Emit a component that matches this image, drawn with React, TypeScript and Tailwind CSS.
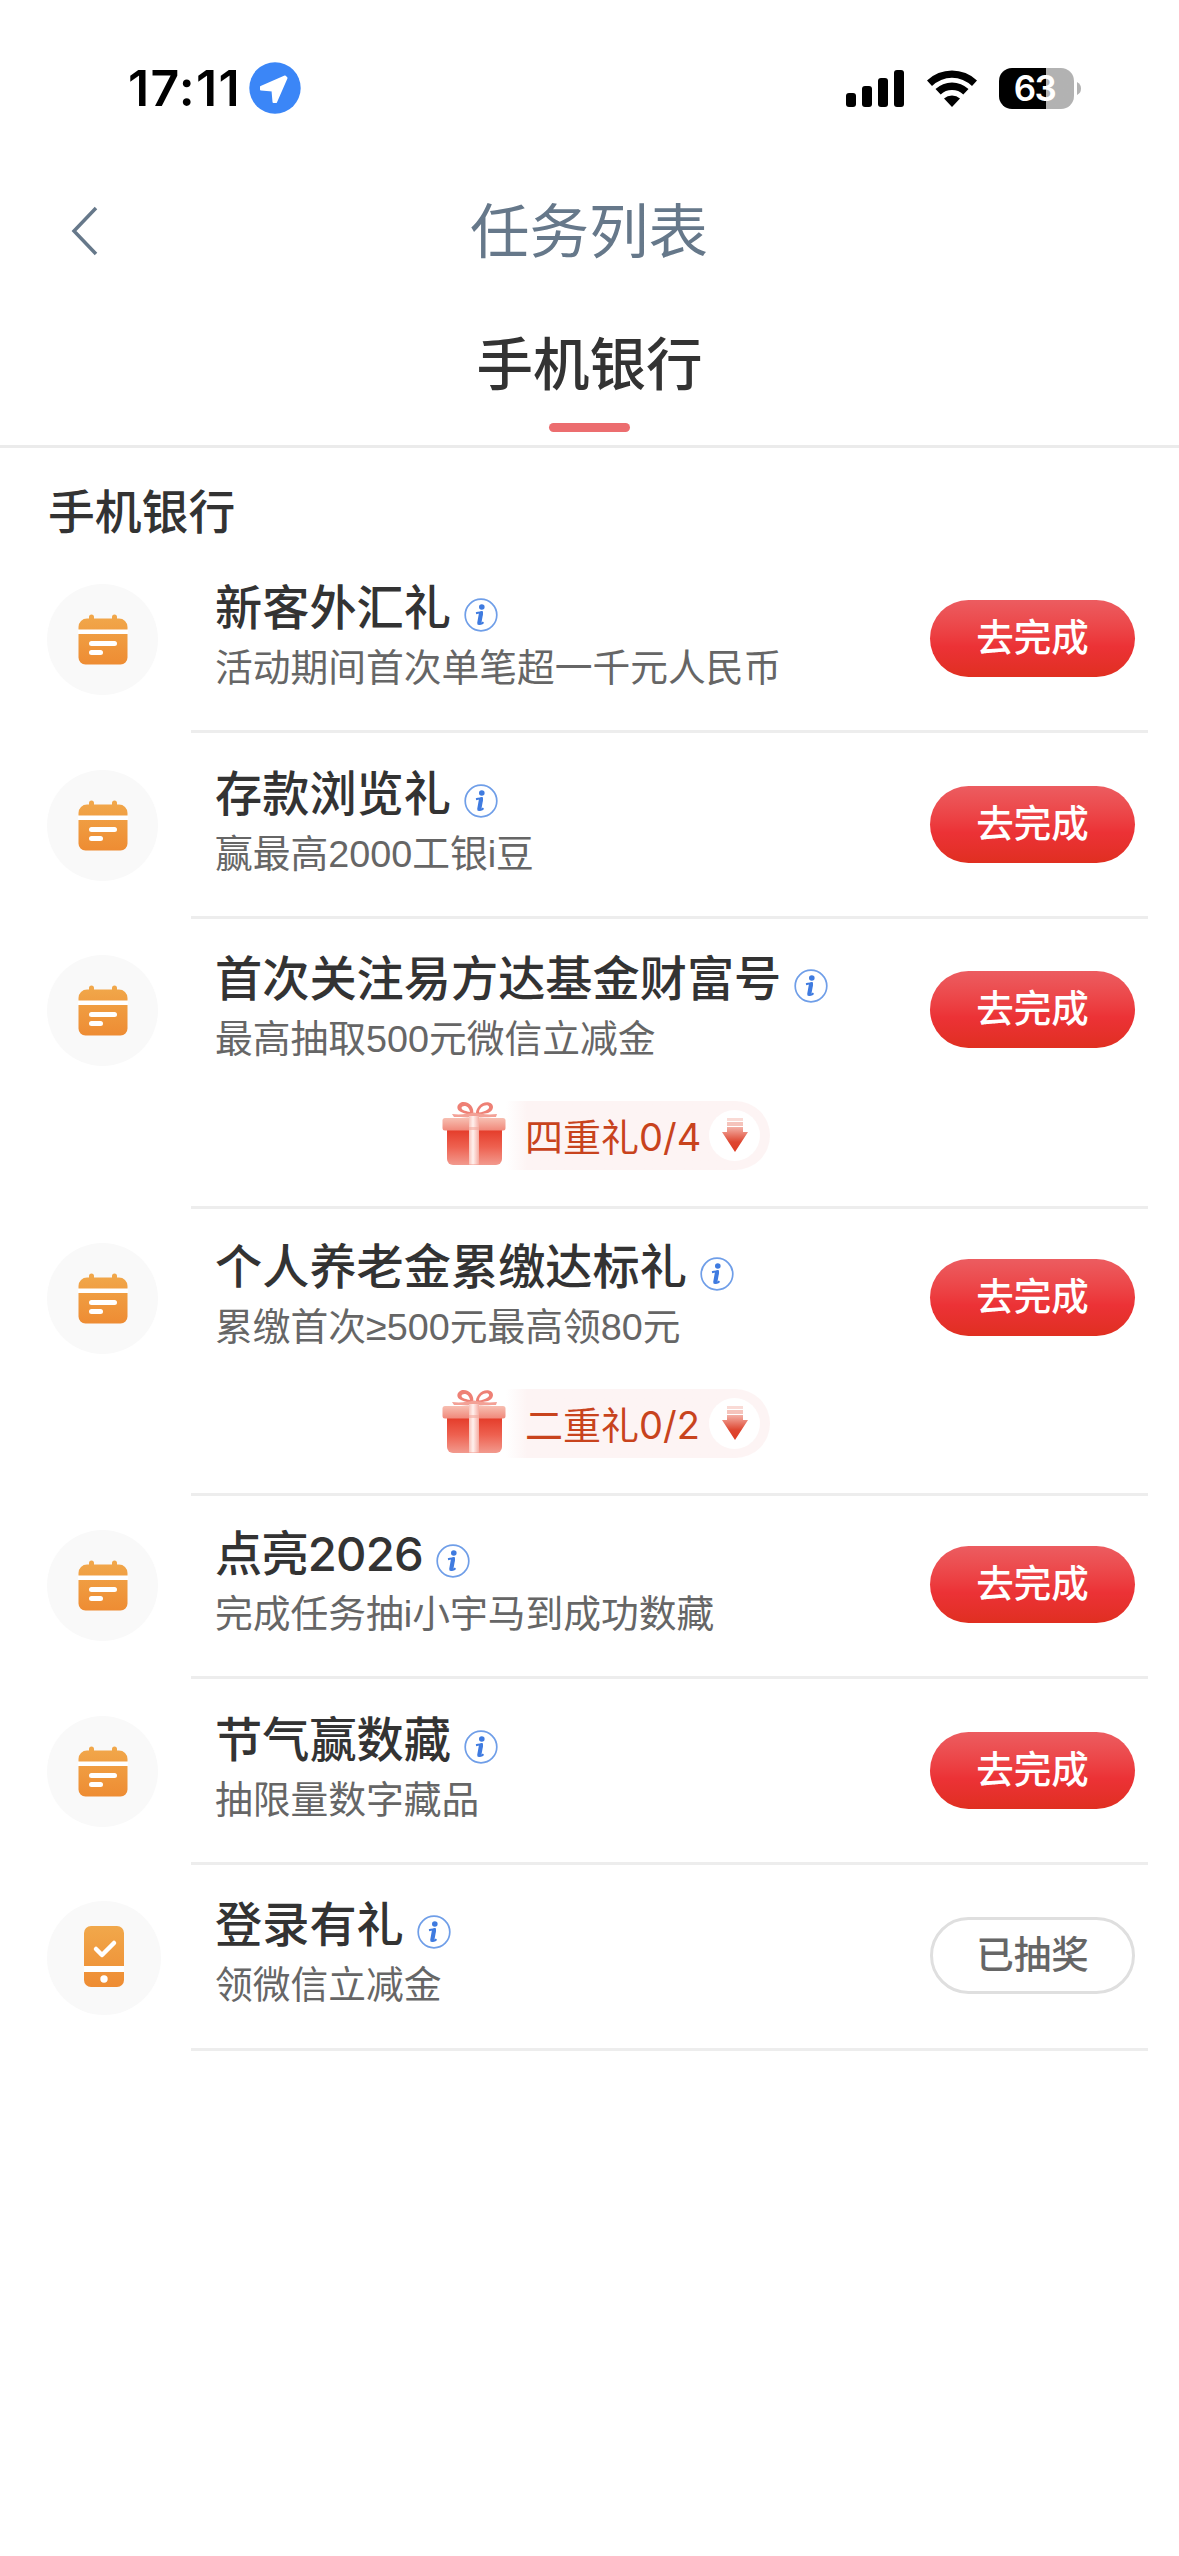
import React from 'react';

interface Task {
  title: string;
  desc: string;
  action: string;
  done?: boolean;
  icon: 'calendar' | 'phone';
  gift?: string;
  rowClass: string;
  titleClass?: string;
}

const tasks: Task[] = [
  { title: '新客外汇礼', desc: '活动期间首次单笔超一千元人民币', action: '去完成', icon: 'calendar', rowClass: 'h-[185px] pt-[36px]' },
  { title: '存款浏览礼', desc: '赢最高2000工银i豆', action: '去完成', icon: 'calendar', rowClass: 'h-[186px] pt-[37px]' },
  { title: '首次关注易方达基金财富号', desc: '最高抽取500元微信立减金', action: '去完成', icon: 'calendar', gift: '四重礼0/4', rowClass: 'h-[290px] pt-[36px]' },
  { title: '个人养老金累缴达标礼', desc: '累缴首次≥500元最高领80元', action: '去完成', icon: 'calendar', gift: '二重礼0/2', rowClass: 'h-[287px] pt-[34px]' },
  { title: '点亮2026', desc: '完成任务抽i小宇马到成功数藏', action: '去完成', icon: 'calendar', rowClass: 'h-[183px] pt-[34px]', titleClass: 'tracking-[-0.8px]' },
  { title: '节气赢数藏', desc: '抽限量数字藏品', action: '去完成', icon: 'calendar', rowClass: 'h-[186px] pt-[37px]' },
  { title: '登录有礼', desc: '领微信立减金', action: '已抽奖', done: true, icon: 'phone', rowClass: 'h-[186px] pt-[36px]' },
];

function StatusBar() {
  return (
    <div className="flex h-[176px] items-center pl-[128px] pr-[98px]">
      <span className="w-[121px] whitespace-nowrap font-['Inter'] text-[50px] font-semibold leading-none tracking-[1.3px] text-black">17:11</span>
      <svg width="52" height="52" viewBox="0 0 52 52">
        <circle cx="26" cy="26" r="25.700" fill="#3b86f7" />
        <path d="M36 14.500 L12 25 L12 27.500 L23.500 28.500 L24.500 40 L27 40 L37.500 16 Z" fill="#fff" stroke="#fff" strokeWidth="2" strokeLinejoin="round" />
      </svg>
      <svg className="ml-auto" width="58" height="37" viewBox="0 0 58 37">
        <rect x="0" y="23" width="10" height="14" rx="3" />
        <rect x="16" y="16" width="10" height="21" rx="3" />
        <rect x="32" y="8" width="10" height="29" rx="3" />
        <rect x="48" y="0" width="10" height="37" rx="3" />
      </svg>
      <svg className="ml-[23px]" width="50" height="37" viewBox="0 0 50 37">
        <path d="M0 10.5 A36 36 0 0 1 50 10.5 L45 16 A28.5 28.5 0 0 0 5 16 Z" />
        <path d="M8.5 19 A24 24 0 0 1 41.5 19 L36.3 24.6 A16.5 16.5 0 0 0 13.7 24.6 Z" />
        <path d="M17 28.5 A12 12 0 0 1 33 28.5 L25 37 Z" />
      </svg>
      <div className="ml-[22px] flex h-[41px] w-[75px] items-center justify-center rounded-[13px] bg-linear-to-r from-black from-[63%] to-[#b2b2b2] to-[63%]">
        <span className="pr-[4px] font-['Inter'] text-[35px] font-semibold leading-none tracking-[-1.5px] text-white">63</span>
      </div>
      <svg className="ml-[3px]" width="4" height="13" viewBox="0 0 4 13">
        <path d="M0 0 Q4 2 4 6.5 T0 13 Z" fill="#b2b2b2" />
      </svg>
    </div>
  );
}

function CalendarIcon() {
  return (
    <svg width="50" height="51" viewBox="0 0 50 51">
      <defs>
        <linearGradient id="calendar" x1="0" y1="0" x2="0" y2="1">
          <stop offset="0" stopColor="#f1a84b" />
          <stop offset="1" stopColor="#ee8c33" />
        </linearGradient>
      </defs>
      <path
        d="M11 4.500 V3 a2.500 2.500 0 0 1 5 0 V4.500 H34 V3 a2.500 2.500 0 0 1 5 0 V4.500 H41 a8.500 8.500 0 0 1 8.500 8.500 V43.500 a7 7 0 0 1 -7 7 H7.500 a7 7 0 0 1 -7 -7 V13 A8.500 8.500 0 0 1 9 4.500 Z"
        fill="url(#calendar)"
      />
      <rect x="0" y="15.500" width="50" height="4.500" fill="#fff" />
      <rect x="11" y="27" width="28" height="5" rx="2.500" fill="#fff" />
      <rect x="11" y="36" width="14" height="5" rx="2.500" fill="#fff" />
    </svg>
  );
}

function PhoneIcon() {
  return (
    <svg className="-mt-[3px]" width="40" height="61" viewBox="0 0 40 61">
      <defs>
        <linearGradient id="phone" x1="0" y1="0" x2="0" y2="1">
          <stop offset="0" stopColor="#f1a84b" />
          <stop offset="1" stopColor="#ee8c33" />
        </linearGradient>
      </defs>
      <rect width="40" height="61" rx="7" fill="url(#phone)" />
      <rect y="40" width="40" height="6" fill="#fff" />
      <path d="M12 23 L18 29 L30 17" stroke="#fff" strokeWidth="4.500" fill="none" strokeLinecap="round" strokeLinejoin="round" />
      <circle cx="20" cy="53" r="3.700" fill="#fff" />
    </svg>
  );
}

function InfoIcon() {
  return (
    <svg className="ml-[13px] mt-[14px] shrink-0" width="34" height="34" viewBox="0 0 34 34" fill="none">
      <circle cx="17" cy="17" r="15.800" stroke="#6f9ee8" strokeWidth="1.700" />
      <circle cx="17.800" cy="9" r="2.800" fill="#3f7be0" />
      <path d="M12 15.200 C14 14.800 16 14.600 18 14 L15.600 24 C15.200 26.500 17 26.300 19.500 24.200" stroke="#3f7be0" strokeWidth="2" strokeLinejoin="round" />
      <path d="M17 15.500 L15.300 25" stroke="#3f7be0" strokeWidth="4.200" strokeLinecap="round" />
    </svg>
  );
}

function GiftIcon() {
  return (
    <svg width="64" height="65" viewBox="0 0 64 65">
      <defs>
        <linearGradient id="giftBox" x1="0" y1="0" x2="0" y2="1">
          <stop offset="0" stopColor="#e43a28" />
          <stop offset="0.500" stopColor="#ee6150" />
          <stop offset="1" stopColor="#f29a8e" />
        </linearGradient>
        <linearGradient id="giftLid" x1="0" y1="0" x2="0" y2="1">
          <stop offset="0" stopColor="#f7bfb2" />
          <stop offset="1" stopColor="#f0887a" />
        </linearGradient>
        <linearGradient id="giftRibbon" x1="0" y1="0" x2="1" y2="0">
          <stop offset="0" stopColor="#f7c4bb" />
          <stop offset="0.400" stopColor="#fff1ee" />
          <stop offset="1" stopColor="#f5aca2" />
        </linearGradient>
      </defs>
      <path
        d="M31 14 C33 6 27 0 20 1 C14 3 14 9 19 11 C23 13 27 13 31 14 Z M28 11 C25 10 20 10 19.500 7 C20 4 27 4 28 11 Z"
        fill="#ee8075"
        fillRule="evenodd"
      />
      <path
        d="M34 14 C33 7 40 0 47 1.500 C53 3 52 10 46 12 C42 13 38 13 34 14 Z M37 11.500 C37 7 42 3.500 46 4.500 C50 7 43 11 37 11.500 Z"
        fill="#ee8075"
        fillRule="evenodd"
      />
      <path d="M10 13 C18 14 26 13 32 11.500 C38 13 46 14 55 13 L54 16 C46 16 38 17 32 16 C26 17 18 16 12 16 Z" fill="#f3a196" />
      <path d="M5 28 H60 V58 a6 6 0 0 1 -6 6 H11 a6 6 0 0 1 -6 -6 Z" fill="url(#giftBox)" />
      <rect x="0.500" y="17" width="63" height="12.500" rx="2.500" fill="url(#giftLid)" />
      <rect x="27" y="15" width="10" height="48.500" fill="url(#giftRibbon)" />
      <rect x="27" y="26" width="10" height="3" fill="#f3a89d" opacity="0.600" />
    </svg>
  );
}

function GiftBadge({ label }: { label: string }) {
  return (
    <div className="ml-[442px] mt-[35px] flex items-start">
      <GiftIcon />
      <div className="flex h-[69px] w-[264px] items-center rounded-r-full bg-linear-to-r from-white to-[#fdf4f4] to-[8%] pl-[19px] pr-[10px]">
        <span className="whitespace-nowrap pt-[2px] font-['Inter','Noto_Sans_CJK_SC',sans-serif] text-[38px] leading-none text-[#c8431d]">{label}</span>
        <span className="ml-auto flex size-[51px] items-center justify-center rounded-full bg-white">
          <svg className="-mt-px" width="26" height="34" viewBox="0 0 26 34">
            <defs>
              <linearGradient id="arrow" x1="0" y1="0" x2="0" y2="1">
                <stop offset="0" stopColor="#f3b0a6" />
                <stop offset="0.600" stopColor="#de4630" />
                <stop offset="1" stopColor="#de3a22" />
              </linearGradient>
            </defs>
            <rect x="5" y="0" width="16" height="3" fill="#f9dad5" />
            <rect x="5" y="4" width="16" height="4" fill="#f5c3bb" />
            <path d="M5 9 H21 V14 H26 L13 34 L0 14 H5 Z" fill="url(#arrow)" />
          </svg>
        </span>
      </div>
    </div>
  );
}

function TaskRow({ task }: { task: Task }) {
  return (
    <li className={`flex flex-col ${task.rowClass}`}>
      <div className="flex h-[111px] items-start pl-[47px] pr-[44px]">
        {task.icon === 'calendar' ? (
          <div className="flex size-[111px] shrink-0 items-center justify-center rounded-full bg-[#f9f9f9]">
            <CalendarIcon />
          </div>
        ) : (
          <div className="-mr-[3px] flex size-[114px] shrink-0 items-center justify-center rounded-full bg-[#f9f9f9]">
            <PhoneIcon />
          </div>
        )}
        <div className="ml-[57px] flex flex-col">
          <div className="flex h-[47px] items-start">
            <h3 className={`whitespace-nowrap font-['Inter','Noto_Sans_CJK_SC',sans-serif] text-[47.200px] font-medium leading-[47px] text-[#333] ${task.titleClass ?? ''}`}>
              {task.title}
            </h3>
            <InfoIcon />
          </div>
          <p className="mt-[18px] whitespace-nowrap text-[37.750px] leading-[38px] text-[#666]">{task.desc}</p>
        </div>
        <button
          className={`ml-auto mt-[16px] flex h-[77px] w-[205px] shrink-0 items-center justify-center rounded-full text-[37.500px] leading-none ${
            task.done
              ? 'border-[3px] border-[#dfdfdf] bg-white font-medium text-[#666]'
              : 'bg-linear-to-b from-[#ec5c60] via-[#ec3236] via-[60%] to-[#e02f20] font-medium text-white'
          }`}
        >
          {task.action}
        </button>
      </div>
      {task.gift && <GiftBadge label={task.gift} />}
      <div className="ml-[191px] mr-[31px] mt-auto h-[3px] bg-[#ededed]" />
    </li>
  );
}

export default function App() {
  return (
    <div className="min-h-[2556px] w-[1179px] bg-white font-['Liberation_Sans','Noto_Sans_CJK_SC',sans-serif]">
      <StatusBar />
      <header className="flex h-[110px] items-center pl-[70px]">
        <svg width="28" height="50" viewBox="0 0 28 50" fill="none">
          <path d="M26 2 L4 25 L26 48" stroke="#66788a" strokeWidth="3.500" />
        </svg>
        <h1 className="ml-[372px] pt-[4px] text-[59.500px] leading-none text-[#66788a]">任务列表</h1>
      </header>
      <nav className="flex h-[162px] flex-col items-center border-b-[3px] border-[#ebebeb] pt-[51px]">
        <span className="text-[56.500px] font-medium leading-[57px] text-[#333]">手机银行</span>
        <span className="mt-[29px] h-[9px] w-[81px] rounded-full bg-[#ec6d6f]" />
      </nav>
      <h2 className="h-[100px] pl-[48px] pt-[42px] text-[46.800px] font-medium leading-[47px] text-[#333]">手机银行</h2>
      <ul>
        {tasks.map((task) => (
          <TaskRow key={task.title} task={task} />
        ))}
      </ul>
    </div>
  );
}
